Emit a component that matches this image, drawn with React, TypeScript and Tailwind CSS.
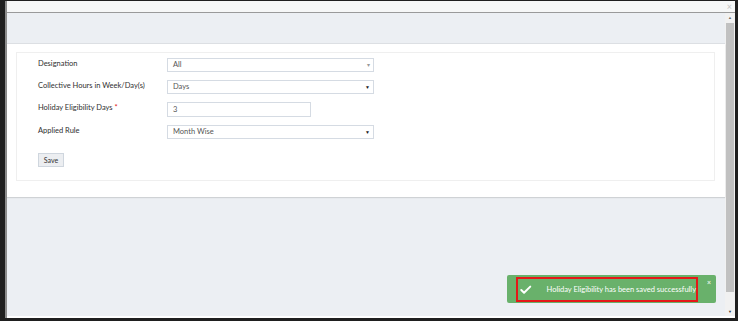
import { Check } from "lucide-react";

const font = { fontFamily: "Lato, 'Open Sans', sans-serif" };

function SelectBox({ value, caret }: { value: string; caret: "thin" | "solid" }) {
  return (
    <div className="flex h-[14px] w-[207px] items-center justify-between border border-[#d5dbe3] bg-white pl-[5px] pr-[3px] text-[7.5px] text-[#555]">
      <span>{value}</span>
      {caret === "thin" ? (
        <span className="text-[6px] leading-none text-[#999]">▾</span>
      ) : (
        <span className="text-[5px] leading-none text-[#222]">▼</span>
      )}
    </div>
  );
}

function Row({ label, required, children }: { label: string; required?: boolean; children: React.ReactNode }) {
  return (
    <div className="flex items-start">
      <div className="w-[129px] pt-[1px] text-[7.5px] leading-[9px] text-[#2f2f2f]">
        {label}
        {required && <span className="ml-[2px] text-[#e02020]">*</span>}
      </div>
      {children}
    </div>
  );
}

export default function App() {
  return (
    <div
      style={font}
      className="flex h-[321px] w-[738px] flex-col overflow-hidden border-b-[3px] border-l-[5px] border-r-[3px] border-t border-[#1f1f1f] bg-[#1f1f1f]"
    >
      <div className="flex min-h-0 flex-1 flex-col border-l-2 border-[#8c8c8c]">
        {/* title strip */}
        <div className="flex h-[12px] shrink-0 items-center justify-end border-b border-[#9a9a9a] bg-[#f6f7f7] pr-[3px]">
          <span className="text-[9px] leading-none text-[#c4c4c4]">×</span>
        </div>

        <div className="flex min-h-0 flex-1">
          <div className="relative flex min-w-0 flex-1 flex-col bg-[#eceff3]">
            <div className="h-[31px] shrink-0 border-b border-[#dcdfe3]" />

            <div className="shrink-0 bg-white pb-[16px] pl-[9px] pr-[10px] pt-[8px] shadow-[0_1px_1px_rgba(0,0,0,0.12)]">
              <div className="flex flex-col gap-[8px] border border-[#efefef] pb-[13px] pl-[21px] pt-[5px]">
                <Row label="Designation">
                  <SelectBox value="All" caret="thin" />
                </Row>
                <Row label="Collective Hours in Week/Day(s)">
                  <SelectBox value="Days" caret="solid" />
                </Row>
                <Row label="Holiday Eligibility Days" required>
                  <div className="flex h-[15px] w-[144px] items-center border border-[#d5dbe3] bg-white pl-[5px] text-[7.5px] text-[#555]">
                    3
                  </div>
                </Row>
                <Row label="Applied Rule">
                  <SelectBox value="Month Wise" caret="solid" />
                </Row>
                <div className="flex pt-[6px]">
                  <button className="flex h-[14px] w-[26px] items-center justify-center border border-[#cfd6de] bg-[#eceef1] text-[7px] leading-none text-[#333]">
                    Save
                  </button>
                </div>
              </div>
            </div>

            <div className="flex-1" />

            {/* toast */}
            <div className="absolute bottom-[13px] right-[9px] flex h-[28px] w-[209px] items-start rounded-[2px] bg-[#69b16b] pl-[9px] pr-[5px] pt-[2px]">
              <div className="flex h-[25px] w-[182px] items-center border-2 border-[#e41818] pl-[1px]">
                <Check className="h-[14px] w-[14px] text-white" strokeWidth={3.5} />
                <span className="ml-[14px] whitespace-nowrap text-[7.5px] text-white">
                  Holiday Eligibility has been saved successfully
                </span>
              </div>
              <span className="ml-[9px] mt-[2px] text-[7px] font-bold leading-none text-[#e6f2e6]">×</span>
            </div>
          </div>

          {/* scrollbar */}
          <div className="flex w-[10px] shrink-0 flex-col items-center bg-[#f1f1f1]">
            <div className="flex h-[9px] items-center justify-center text-[4px] leading-none text-[#666]">▲</div>
            <div className="mt-[1px] h-[269px] w-[8px] bg-[#c1c1c1]" />
            <div className="flex-1" />
            <div className="flex h-[9px] items-center justify-center text-[4px] leading-none text-[#333]">▼</div>
          </div>
        </div>

        <div className="h-[2px] shrink-0 bg-white" />
      </div>
    </div>
  );
}
